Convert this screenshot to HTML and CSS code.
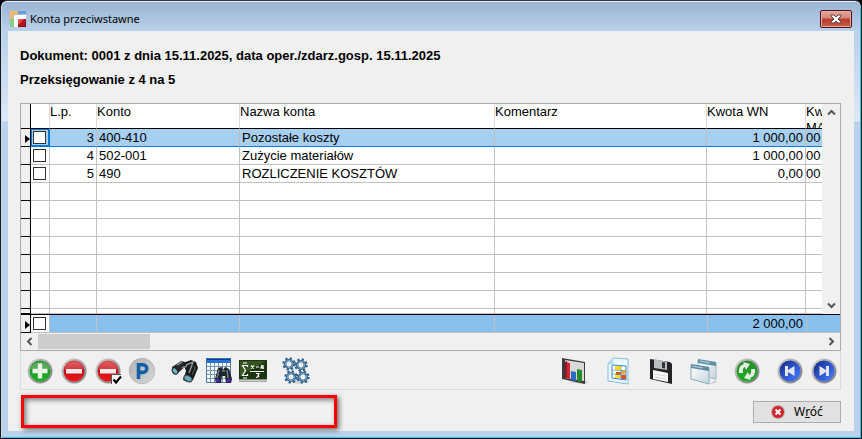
FILE: index.html
```html
<!DOCTYPE html>
<html lang="pl">
<head>
<meta charset="utf-8">
<title>Konta przeciwstawne</title>
<link rel="stylesheet" href="styles.css">
</head>
<body>
<svg class="defs" aria-hidden="true">
  <defs>
    <linearGradient id="rim" x1="0" y1="0" x2="1" y2="1"><stop offset="0" stop-color="#d4d4d4"/><stop offset="1" stop-color="#777"/></linearGradient>
    <linearGradient id="green" x1="0" y1="0" x2="0" y2="1"><stop offset="0" stop-color="#2c8a2c"/><stop offset="1" stop-color="#18b020"/></linearGradient>
    <linearGradient id="red" x1="0" y1="0" x2="0" y2="1"><stop offset="0" stop-color="#d84848"/><stop offset=".5" stop-color="#c8101c"/><stop offset="1" stop-color="#f01818"/></linearGradient>
    <linearGradient id="blue" x1="0" y1="0" x2="1" y2="1"><stop offset="0" stop-color="#14287c"/><stop offset=".45" stop-color="#2a50c8"/><stop offset="1" stop-color="#4a80ff"/></linearGradient>
    <linearGradient id="silver" x1="0" y1="0" x2="1" y2="1"><stop offset="0" stop-color="#b2b2b2"/><stop offset="1" stop-color="#d6d6d6"/></linearGradient>
    <linearGradient id="pane" x1="0" y1="0" x2="1" y2="1"><stop offset="0" stop-color="#fff"/><stop offset="1" stop-color="#c3d5dc"/></linearGradient>
    <g id="gear">
      <circle r="5.600" fill="none" stroke="#2f5d87" stroke-width="2.200" stroke-dasharray="2.200 2.200"/>
      <circle r="3.800" fill="none" stroke="#34658f" stroke-width="2.600"/>
      <circle r="3.600" fill="none" stroke="#7ea5c4" stroke-width="1"/>
      <circle r="2.400" fill="#f0f0f0"/>
    </g>
  </defs>
</svg>
<main class="dialog">
  <header class="titlebar">
    <svg class="app-icon" viewBox="0 0 16 16" aria-hidden="true">
      <path fill="#f9b765" d="M0 0h8v3H5q-2 0-2 2v3H0z"/><path fill="#659bdc" d="M8 0h8v3H8z"/><path fill="#86d284" d="M0 8h4v8H0z"/>
      <path fill="#fff" d="M4 16V6q0-2 2-2h10v4H8v8z"/><path fill="#b7141d" d="M8 8h8v8H8z"/><path fill="#e24e4e" d="M8 8h6l-6 6z"/><path fill="#7f0d14" d="M9 15h6V9h1v7H8z"/>
    </svg>
    <h1 class="title">Konta przeciwstawne</h1>
    <button class="close" type="button" aria-label="Zamknij">
      <svg viewBox="0 0 12 10" aria-hidden="true"><path d="M1 1h3l2 2 2-2h3v1L8 5l3 3v1H8L6 7 4 9H1V8l3-3-3-3z" fill="#fff" stroke="#56444a"/></svg>
    </button>
  </header>
  <div class="content">
    <div class="summary">
      <p>Dokument: 0001 z dnia 15.11.2025, data oper./zdarz.gosp. 15.11.2025</p>
      <p>Przeksięgowanie z 4 na 5</p>
    </div>
    <section class="grid">
      <div class="grid-main">
        <table class="accounts">
          <colgroup><col class="c-mark"><col class="c-check"><col class="c-lp"><col class="c-konto"><col class="c-nazwa"><col><col class="c-kwota"><col class="c-cut"></colgroup>
          <thead><tr><th class="mark"></th><th></th><th>L.p.</th><th>Konto</th><th>Nazwa konta</th><th>Komentarz</th><th>Kwota WN</th><th class="cut"><div class="cut-label">Kw<br>MA</div></th></tr></thead>
          <tbody>
            <tr class="selected"><td class="mark"><span class="pointer"></span></td><td class="check"><input type="checkbox" aria-label="Zaznacz pozycję 3"></td><td class="num">3</td><td>400-410</td><td>Pozostałe koszty</td><td></td><td class="num">1 000,00</td><td class="cut">00</td></tr>
            <tr><td class="mark"></td><td class="check"><input type="checkbox" aria-label="Zaznacz pozycję 4"></td><td class="num">4</td><td>502-001</td><td>Zużycie materiałów</td><td></td><td class="num">1 000,00</td><td class="cut">00</td></tr>
            <tr><td class="mark"></td><td class="check"><input type="checkbox" aria-label="Zaznacz pozycję 5"></td><td class="num">5</td><td>490</td><td>ROZLICZENIE KOSZTÓW</td><td></td><td class="num">0,00</td><td class="cut">00</td></tr>
            <tr><td class="mark"></td><td></td><td></td><td></td><td></td><td></td><td></td><td class="cut"></td></tr>
            <tr><td class="mark"></td><td></td><td></td><td></td><td></td><td></td><td></td><td class="cut"></td></tr>
            <tr><td class="mark"></td><td></td><td></td><td></td><td></td><td></td><td></td><td class="cut"></td></tr>
            <tr><td class="mark"></td><td></td><td></td><td></td><td></td><td></td><td></td><td class="cut"></td></tr>
            <tr><td class="mark"></td><td></td><td></td><td></td><td></td><td></td><td></td><td class="cut"></td></tr>
            <tr><td class="mark"></td><td></td><td></td><td></td><td></td><td></td><td></td><td class="cut"></td></tr>
            <tr><td class="mark"></td><td></td><td></td><td></td><td></td><td></td><td></td><td class="cut"></td></tr>
            <tr class="partial"><td class="mark"></td><td></td><td></td><td></td><td></td><td></td><td></td><td class="cut"></td></tr>
          </tbody>
        </table>
        <div class="vscroll">
          <button type="button" aria-label="W górę"><svg viewBox="0 0 9 9"><path d="M1 6.500 4.500 3 8 6.500"/></svg></button>
          <button type="button" aria-label="W dół"><svg viewBox="0 0 9 9"><path d="M1 2.500 4.500 6 8 2.500"/></svg></button>
        </div>
      </div>
      <table class="accounts totals">
        <colgroup><col class="c-mark"><col class="c-check"><col class="c-lp"><col class="c-konto"><col class="c-nazwa"><col><col class="c-kwota"><col class="c-last"></colgroup>
        <tbody><tr><td class="mark"><span class="pointer"></span></td><td class="check"><input type="checkbox" aria-label="Zaznacz wszystkie"></td><td></td><td></td><td></td><td></td><td class="num">2 000,00</td><td class="cut"></td></tr></tbody>
      </table>
      <div class="hscroll">
        <button type="button" aria-label="W lewo"><svg viewBox="0 0 9 9"><path d="M6.500 1 3 4.500 6.500 8"/></svg></button>
        <div class="track"><div class="thumb"></div></div>
        <button type="button" aria-label="W prawo"><svg viewBox="0 0 9 9"><path d="M2.500 1 6 4.500 2.500 8"/></svg></button>
      </div>
    </section>
    <div class="toolbar" role="toolbar" aria-label="Operacje">
      <div class="group">
        <button type="button" aria-label="Dodaj"><svg viewBox="0 0 30 30"><circle cx="15" cy="15" r="12.500" fill="url(#rim)"/><circle cx="15" cy="15" r="10.500" fill="url(#green)"/><path d="M5 13a10.500 10.500 0 0 1 20 0q-10 4-20 0z" fill="#fff" opacity=".22"/><path d="M12.800 7.500h4.400v5.300h5.300v4.400h-5.300v5.300h-4.400v-5.300H7.500v-4.400h5.300z" fill="#e9f2e9"/></svg></button>
        <button type="button" aria-label="Usuń"><svg viewBox="0 0 30 30"><circle cx="15" cy="15" r="12.500" fill="url(#rim)"/><circle cx="15" cy="15" r="10.500" fill="url(#red)"/><path d="M5 13a10.500 10.500 0 0 1 20 0q-10 3-20 0z" fill="#fff" opacity=".15"/><path d="M7 13h16v4.500H7z" fill="#f3e8e8"/></svg></button>
        <button type="button" aria-label="Usuń zaznaczone"><svg viewBox="0 0 30 30"><circle cx="15" cy="15" r="12.500" fill="url(#rim)"/><circle cx="15" cy="15" r="10.500" fill="url(#red)"/><path d="M5 13a10.500 10.500 0 0 1 20 0q-10 3-20 0z" fill="#fff" opacity=".15"/><path d="M7 13h16v4.500H7z" fill="#f3e8e8"/><path d="M18.500 18.500h10v10h-10z" fill="#f8f8f8"/><path d="M18.500 28V18.500H28" fill="none" stroke="#555"/><path d="m20.500 23.500 2.500 3 5-6" fill="none" stroke="#000" stroke-width="2.200"/></svg></button>
        <button type="button" aria-label="Księguj"><svg viewBox="0 0 30 30"><circle cx="15" cy="15" r="12.800" fill="url(#silver)" stroke="#aaa" stroke-width=".6"/><path d="M11.500 23V8.800h4.500a3.800 3.800 0 0 1 0 7.600h-4.500" fill="none" stroke="#135fa6" stroke-width="3.600"/></svg></button>
      </div>
      <div class="group">
        <button type="button" aria-label="Szukaj"><svg viewBox="0 0 30 30"><path d="m2 11 9-6 4 1 2 3-9 8-5 1z" fill="#252b2e"/><path d="m13 7 8-3 5 2 2 6-5 12-5 2-5-2 3-9z" fill="#171b1d"/><path d="m7 9 5-3m4 3 7-3-4 11M12 12l5-2" fill="none" stroke="#89918f" stroke-width="1.500"/><ellipse cx="5" cy="15" rx="2.400" ry="3.500" transform="rotate(-35 5 15)" fill="#74b6c4" stroke="#222"/><ellipse cx="18" cy="22.500" rx="4.400" ry="2.900" transform="rotate(30 18 22.500)" fill="#67aabb" stroke="#333"/><path d="m24 10 1 2-3 7" stroke="#59605e" fill="none"/></svg></button>
        <button type="button" aria-label="Szukaj w tabeli"><svg viewBox="0 0 30 30"><path d="M2.500 2.500h24v24h-24z" fill="#f6fbff" stroke="#52799c"/><path d="M2 2h25v5H2z" fill="#2873ce"/><path d="M3 3h23v1H3z" fill="#173a80"/><path d="M6.500 7v19m4-19v19m4-19v19m4-19v19m4-19v19M3 10.500h23M3 14.500h23M3 18.500h23M3 22.500h23" stroke="#7396b5"/><path d="m14 12 4-1 1 3 2-3 4 2 3 10-1 4h-5l-1-7h-3l-1 7h-5l-1-4z" fill="#1d252d"/><path d="m15 14-2 8m10-8 1 8M18 15h3" stroke="#77838c" stroke-width="1.400"/><circle cx="13.500" cy="24.500" r="2" fill="#4f26b0"/><circle cx="24.500" cy="24.500" r="2" fill="#4f26b0"/></svg></button>
        <button type="button" aria-label="Suma"><svg viewBox="0 0 30 30"><path d="M1 4h28v22H1z" fill="#a8aaa5"/><path d="M1 4h28v20H1z" fill="#1d350f"/><path d="M2 5h26L2 20z" fill="#345522"/><path d="M1 24h28M1 26.500h28" stroke="#eee"/><path d="M9.500 11V9.500h-5l3 5-3 5h5V18M5 7h4M5 22h4M12 15.500h14M13 9.500l3 3m0-3-3 3M18 11h3m3-2-1 3h3m-1-3v4M18 17.500h3l-1 2q2 1-2 2" fill="none" stroke="#fff" stroke-width="1.200"/></svg></button>
      </div>
      <div class="group">
        <button type="button" aria-label="Ustawienia"><svg viewBox="0 0 30 30"><path d="M3 24q12-5 26 2l-12 2z" fill="#cfd4dc"/><use href="#gear" x="8" y="8"/><use href="#gear" x="20" y="9"/><use href="#gear" x="10" y="21"/><use href="#gear" x="22" y="21"/></svg></button>
      </div>
      <div class="group push">
        <button type="button" aria-label="Wykres"><svg viewBox="0 0 30 30"><path d="m24 25 5 1-5 2L8 26z" fill="#c8c8c8"/><path d="m2 2 23 4v22L2 23z" fill="#3b3b3d"/><path d="m5 4 19 3v18L5 22z" fill="#dadada"/><path d="m5 6 5 1v16l-5-1z" fill="#d32430"/><path d="m11 15 5 1v9l-5-1z" fill="#286bc1"/><path d="m17 13 5 1v12l-5-1z" fill="#258b28"/><path d="m5 6 2-1v17l-2-1z" fill="#941520"/></svg></button>
      </div>
      <div class="group">
        <button type="button" aria-label="Arkusz"><svg viewBox="0 0 30 30"><path d="m10 2 15 1v25L5 25V8z" fill="#eef8ff" stroke="#83bce4"/><path d="m10 2 1 6-6 1z" fill="#b8ddf6"/><path d="m9 9 14 1v14L9 22z" fill="#fff" stroke="#388bcb"/><path d="M12 10h6v4h-6zm0 8h6v4h-6z" fill="#f7df1f"/><path d="M18 14h5v4h-5z" fill="#f0b323"/><path d="M18 19h5v4h-5zm-5-3h5v3h-5z" fill="#e74d20"/><path d="m9 14 14 1M9 18l14 1M18 10v14" stroke="#4c99d1" stroke-width=".7"/></svg></button>
      </div>
      <div class="group">
        <button type="button" aria-label="Zapisz"><svg viewBox="0 0 30 30"><path d="m4 3 20 3 2 2v20L4 23z" fill="#242426"/><path d="m8 3 13 3v8L8 12z" fill="#b9bcc0"/><path d="m16 6 3 .5v6L16 12z" fill="#333"/><path d="m7 14 15 3v9L7 23z" fill="#fafafa"/><path d="m9 18 11 2M9 21l11 2" stroke="#d7d7d7"/></svg></button>
      </div>
      <div class="group">
        <button type="button" aria-label="Okna"><svg viewBox="0 0 30 30"><path d="m9 4 18 3v16L9 19z" fill="url(#pane)" stroke="#9cb8c3"/><path d="m9 3 18 3v4L9 7z" fill="#628fa4"/><path d="m2 9 18 3v16L2 23z" fill="url(#pane)" stroke="#8facb8"/><path d="m2 8 18 3v4L2 12z" fill="#5c8aa0"/><path d="m3 10 11 2M11 5l10 2" stroke="#bcd4df"/><path d="m20 28 7-4v3z" fill="#ccc"/></svg></button>
      </div>
      <div class="group">
        <button type="button" aria-label="Odśwież"><svg viewBox="0 0 30 30"><circle cx="15" cy="15" r="12.500" fill="url(#rim)"/><circle cx="15" cy="15" r="10.500" fill="url(#green)"/><path d="M7 17q-1-7 5-9l-1-2 7 2-4 6-1-3q-3 1-2 6zM23 13q1 7-5 9l1 2-7-2 4-6 1 3q3-1 2-6z" fill="#e7eee7"/></svg></button>
      </div>
      <div class="group">
        <button type="button" aria-label="Pierwszy"><svg viewBox="0 0 30 30"><circle cx="15" cy="15" r="12.500" fill="url(#rim)"/><circle cx="15" cy="15" r="10.500" fill="url(#blue)"/><path d="M10 10h3v4L19.500 10v10L13 16v4h-3z" fill="#e2e6ef"/></svg></button>
        <button type="button" aria-label="Ostatni"><svg viewBox="0 0 30 30"><circle cx="15" cy="15" r="12.500" fill="url(#rim)"/><circle cx="15" cy="15" r="10.500" fill="url(#blue)"/><path d="M20 10h-3v4L10.500 10v10L17 16v4h3z" fill="#e2e6ef"/></svg></button>
      </div>
    </div>
    <footer class="footer">
      <div class="notice"></div>
      <button class="back" type="button">
        <svg viewBox="0 0 14 14" aria-hidden="true"><circle cx="7" cy="7" r="7" fill="#b9a9a9"/><circle cx="7" cy="7" r="6" fill="#d3202a"/><path d="m4.500 4.500 5 5m0-5-5 5" stroke="#fff" stroke-width="2"/></svg>
        <span>W<u>r</u>óć</span>
      </button>
    </footer>
  </div>
</main>
</body>
</html>
```
FILE: styles.css
```css
* { box-sizing: border-box; }

body {
  margin: 0;
  background: #000;
  color: #000;
  font: 13px/16px "Liberation Sans", Arial, sans-serif;
}

button {
  margin: 0;
  padding: 0;
  border: 0;
  background: none;
  color: inherit;
  font: inherit;
}

svg { display: block; }
.defs { position: absolute; width: 0; height: 0; }

.dialog {
  display: flex;
  flex-direction: column;
  min-height: 100vh;
  padding: 0 7px 7px;
  border: 1px solid #16181c;
  border-top-color: #35353d;
  border-radius: 7px 7px 0 0;
  background: linear-gradient(#99b4d1 0, #b9d1ea 30px, #cfe0f2 90px, #dde9f7 120px, #b9d1ea 121px);
  box-shadow: inset 0 1px #e4eef8, inset 1px 0 #c9dcf0, inset -1px -1px #35c4e0;
}

.titlebar {
  display: flex;
  align-items: center;
  height: 30px;
  padding: 6px 2px 0;
}

.app-icon { width: 16px; height: 16px; }

.title {
  flex: 1;
  margin: 0 0 0 4px;
  font: 11px/16px "Noto Sans", "Open Sans", sans-serif;
}

.close {
  display: grid;
  place-items: center;
  width: 32px;
  height: 18px;
  border: 1px solid #48141c;
  border-radius: 2px;
  background: linear-gradient(#e5a79d 0, #d68376 45%, #b93a28 50%, #c75c45 100%);
  box-shadow: inset 0 0 0 1px #e9aaa0;
}
.close svg { width: 12px; height: 10px; }

.content {
  flex: 1;
  padding: 17px 13px 0 12px;
  background: #f0f0f0;
}

.summary { font-weight: bold; }
.summary p { margin: 0 0 8px; }

.grid {
  margin-top: 15px;
  border: 1px solid #a9abb0;
  background: #fff;
}
.grid-main { display: flex; }

.accounts {
  flex: 1;
  min-width: 0;
  width: 100%;
  table-layout: fixed;
  border-collapse: separate;
  border-spacing: 0;
}

.c-mark { width: 10px; }
.c-check { width: 19px; }
.c-lp { width: 47px; }
.c-konto { width: 143px; }
.c-nazwa { width: 255px; }
.c-kwota { width: 99px; }
.c-cut { width: 16px; }
.c-last { width: 33px; }

.accounts th {
  height: 25px;
  padding: 0;
  border-right: 1px solid #dcdcdc;
  border-bottom: 1px solid #000;
  font-weight: normal;
  text-align: left;
  vertical-align: top;
}

.accounts td {
  height: 18px;
  padding: 0 2px;
  border-right: 1px solid #c0c0c0;
  border-bottom: 1px solid #c0c0c0;
  line-height: 17px;
  white-space: nowrap;
}

.accounts .num { text-align: right; }
.accounts .cut { padding: 0; border-right: 0; overflow: hidden; }
.cut-label { height: 24px; overflow: hidden; }

.accounts .mark {
  padding: 0;
  border-right-color: #000;
  border-bottom-color: #000;
  background: #f0f0f0;
}

.accounts .check { padding: 0 2px; }

.pointer {
  display: block;
  width: 0;
  height: 0;
  margin: 3px 0 0 4px;
  border: solid transparent;
  border-width: 4px 0 4px 5px;
  border-left-color: #000;
}

input[type="checkbox"] {
  appearance: none;
  display: block;
  width: 13px;
  height: 13px;
  margin: 0;
  border: 1px solid #333;
  background: #fff;
}

.selected td { border-bottom-color: #0078d7; background: #a6cff0; }
.selected .check { box-shadow: inset 0 0 0 1px #0078d7; border-right-color: #0078d7; }
.accounts .partial td { height: 5px; }

.vscroll {
  display: flex;
  flex-direction: column;
  justify-content: space-between;
  width: 18px;
  padding-left: 1px;
  background: #f0f0f0;
}

.vscroll button,
.hscroll button {
  display: grid;
  place-items: center;
  width: 17px;
  height: 17px;
}
.vscroll svg,
.hscroll svg {
  width: 9px;
  height: 9px;
  fill: none;
  stroke: #555;
  stroke-width: 2;
}

.totals { border-top: 1px solid #000; }
.totals td { height: 18px; background: #89bfec; }
.totals .check { background: #fff; }
.totals .num { padding-right: 3px; }

.hscroll { display: flex; height: 17px; background: #f0f0f0; }
.track { flex: 1; }
.thumb { width: 112px; height: 15px; margin-top: 1px; background: #cdcdcd; }

.toolbar {
  display: flex;
  gap: 13px;
  padding: 5px 1px 3px 4px;
  border: 1px solid #dcdcdc;
  border-top: 0;
}
.group { display: flex; gap: 4px; }
.push { margin-left: auto; }
.toolbar button,
.toolbar svg { width: 30px; height: 30px; }

.footer {
  display: flex;
  align-items: center;
  justify-content: space-between;
  margin-top: 5px;
}

.notice {
  width: 316px;
  height: 33px;
  margin-left: 1px;
  border: 3px solid #f00;
  box-shadow: 2px 2px 5px #666, inset 2px 2px 5px #777;
}

.back {
  display: flex;
  align-items: center;
  justify-content: center;
  gap: 9px;
  width: 88px;
  height: 22px;
  border: 1px solid #adadad;
  background: #e1e1e1;
  font: 12px/16px "Noto Sans", "Open Sans", sans-serif;
}
.back svg { width: 14px; height: 14px; }
```
